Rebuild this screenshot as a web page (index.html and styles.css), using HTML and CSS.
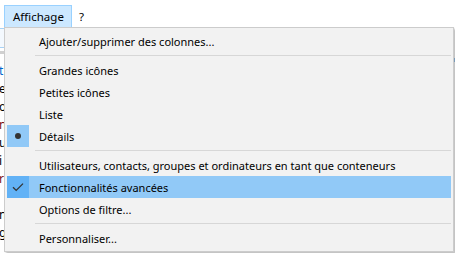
FILE: index.html
```html
<!DOCTYPE html>
<html lang="fr">
<head>
  <meta charset="UTF-8">
  <title>Affichage</title>
  <link rel="stylesheet" href="styles.css">
</head>
<body>
  <div class="window">
    <div class="menubar">
      <span class="menu-title open">Affichage</span>
      <span class="menu-title help">?</span>
    </div>
    <div class="content">
      <div class="side">
        <div class="field"></div>
        <div class="header"></div>
        <div class="letters">
          <span class="link">t</span>
          <span>e</span>
          <span>o</span>
          <span class="red">n</span>
          <span>u</span>
          <span>i</span>
          <span class="red">r</span>
          <span>&nbsp;</span>
          <span>n</span>
          <span>g</span>
        </div>
      </div>
      <div class="main">
        <div class="foot">Date de dernière modification</div>
      </div>
      <div class="edge">
        <div class="edge-mark"></div>
      </div>
    </div>
  </div>

  <div class="popup">
    <div class="item"><span class="icon"></span><span class="label">Ajouter/supprimer des colonnes...</span></div>
    <div class="sep"></div>
    <div class="item"><span class="icon"></span><span class="label">Grandes icônes</span></div>
    <div class="item"><span class="icon"></span><span class="label">Petites icônes</span></div>
    <div class="item"><span class="icon"></span><span class="label">Liste</span></div>
    <div class="item"><span class="icon checked"><span class="dot"></span></span><span class="label">Détails</span></div>
    <div class="sep"></div>
    <div class="item"><span class="icon"></span><span class="label">Utilisateurs, contacts, groupes et ordinateurs en tant que conteneurs</span></div>
    <div class="item hover"><span class="icon checked">
      <svg width="12" height="10" viewBox="0 0 12 10"><path d="M1 5.2 L4.2 8.4 L11 1.6" fill="none" stroke="#333" stroke-width="1.3"/></svg>
    </span><span class="label">Fonctionnalités avancées</span></div>
    <div class="item"><span class="icon"></span><span class="label">Options de filtre...</span></div>
    <div class="sep"></div>
    <div class="item"><span class="icon"></span><span class="label">Personnaliser...</span></div>
  </div>
</body>
</html>
```

FILE: styles.css
```css
body {
  margin: 0;
  width: 455px;
  height: 253px;
  overflow: hidden;
  background: #fff;
  font-family: "Noto Sans", "Open Sans", sans-serif;
  font-size: 11px;
  color: #000;
}

.menubar {
  display: flex;
  height: 27px;
  padding-left: 4px;
  box-sizing: border-box;
  font-size: 11.5px;
}
.menu-title {
  margin-top: 5px;
  height: 21px;
  line-height: 21px;
  padding: 0 7px 0 8px;
  border: 1px solid transparent;
  border-bottom: none;
}
.menu-title.open {
  background: #cce8ff;
  border-color: #99d1ff;
}
.menu-title.help {
  padding-left: 6px;
}

.content {
  display: grid;
  grid-template-columns: 5px 1fr 3px;
  height: 226px;
}
.side {
  overflow: hidden;
  padding-top: 1px;
}
.field {
  height: 18px;
  border: 1px solid #a8d2f5;
  border-left: none;
  background: #f4f9fe;
}
.header {
  height: 3px;
  margin-top: 3px;
  background: #d0d0d0;
}
.letters {
  display: flex;
  flex-direction: column;
  margin-top: 8px;
  line-height: 18px;
  margin-left: -1px;
  font-size: 12px;
}
.letters .link { color: #0066cc; }
.letters .red { color: #7a1010; }

.main {
  display: flex;
  align-items: flex-end;
  overflow: hidden;
}
.foot {
  padding-left: 30px;
  line-height: 14px;
  margin-bottom: -11px;
  color: #222;
}
.edge {
  padding-top: 31px;
}
.edge-mark {
  height: 4px;
  background: #9ec9ee;
}

/* popup menu */
.popup {
  position: absolute;
  left: 4px;
  top: 27px;
  width: 444px;
  padding: 2px;
  background: #f2f2f2;
  border: 1px solid #cccccc;
  box-shadow: 2px 2px 2px rgba(0, 0, 0, 0.25);
}
.item {
  display: flex;
  align-items: center;
  height: 22px;
}
.item.hover {
  background: #91c9f7;
}
.icon {
  width: 22px;
  height: 22px;
  display: flex;
  align-items: center;
  justify-content: center;
  flex: none;
}
.icon.checked {
  background: #91c9f7;
}
.item.hover .icon.checked {
  background: #62b2f6;
}
.dot {
  width: 6px;
  height: 6px;
  border-radius: 50%;
  background: #333;
}
.label {
  margin-left: 10px;
  white-space: nowrap;
}
.sep {
  height: 1px;
  margin: 3px 0 3px 28px;
  background: #d7d7d7;
}
```
